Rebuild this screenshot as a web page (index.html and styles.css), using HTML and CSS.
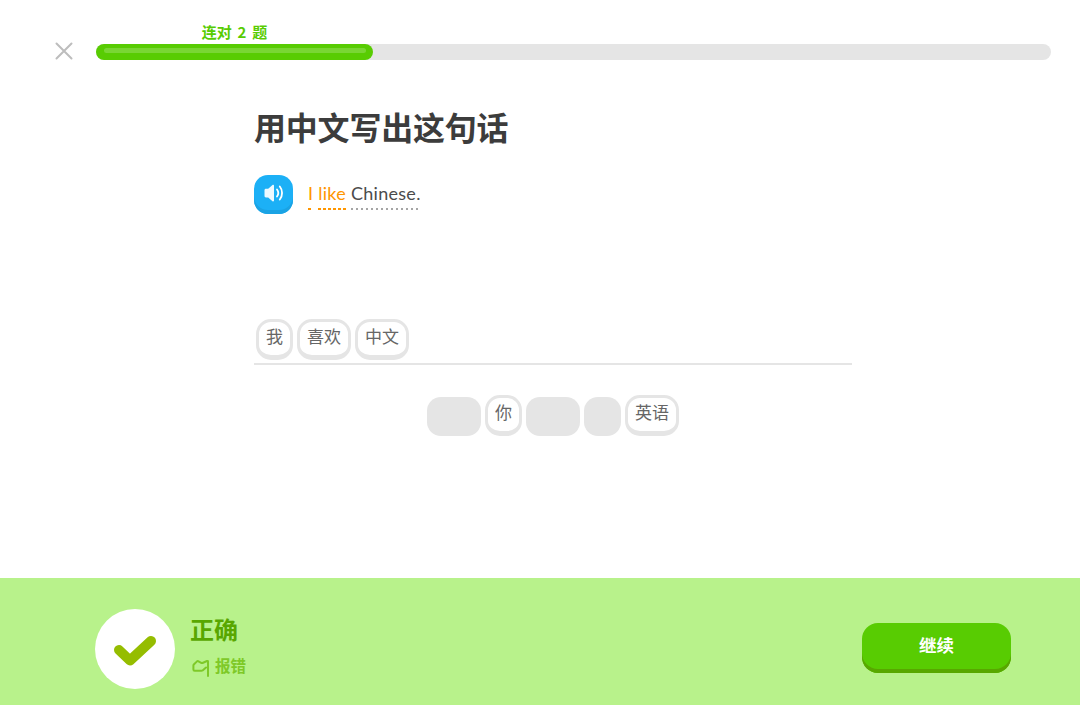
FILE: index.html
```html
<!DOCTYPE html>
<html lang="zh">
<head>
<meta charset="utf-8">
<title>用中文写出这句话</title>
<link rel="stylesheet" href="styles.css">
</head>
<body>
<div class="page">
  <header class="top">
    <button class="close" aria-label="关闭">
      <svg width="18" height="18" viewBox="0 0 18 18"><path d="M1.5 1.5 16.5 16.5M16.5 1.5 1.5 16.5" stroke="#bdbdbd" stroke-width="2" stroke-linecap="round" fill="none"/></svg>
    </button>
    <div class="track">
      <div class="fill">
        <span class="streak">连对 2 题</span>
        <span class="shine"></span>
      </div>
    </div>
  </header>
  <main class="lesson">
    <h1 class="title">用中文写出这句话</h1>
    <div class="prompt">
      <button class="speaker" aria-label="播放">
        <svg width="24" height="24" viewBox="0 0 24 24"><path d="M2.5 9.2c0-.8.6-1.4 1.4-1.4h2.3l4.3-3.9c.6-.5 1.5-.1 1.5.7v15c0 .8-.9 1.2-1.5.7l-4.3-3.9H3.900c-.8 0-1.400-.6-1.400-1.400z" fill="#fff" opacity=".92"/><path d="M15 8.500c1.500 2 1.500 5 0 7" stroke="#fff" stroke-width="1.800" stroke-linecap="round" fill="none"/><path d="M17.800 5.500c3 3.600 3 9.400 0 13" stroke="#fff" stroke-width="1.800" stroke-linecap="round" fill="none"/></svg>
      </button>
      <p class="sentence"><span class="word new">I</span> <span class="word new">like</span> <span class="word">Chinese.</span></p>
    </div>
    <div class="answer">
      <span class="tile">我</span>
      <span class="tile">喜欢</span>
      <span class="tile">中文</span>
    </div>
    <div class="bank">
      <span class="slot wide"></span>
      <span class="tile">你</span>
      <span class="slot wide"></span>
      <span class="slot"></span>
      <span class="tile">英语</span>
    </div>
  </main>
  <footer class="result">
    <div class="verdict">
      <div class="badge">
        <svg width="44" height="34" viewBox="0 0 44 34"><path d="M6 17 17 27.500 38 8" stroke="#95bd00" stroke-width="10" stroke-linecap="round" stroke-linejoin="round" fill="none"/></svg>
      </div>
      <div class="verdict-text">
        <div class="verdict-title">正确</div>
        <div class="report">
          <svg class="report-icon" width="18" height="20" viewBox="0 0 18 20"><path d="M16 18V3.500C16 3 15.500 2.800 15 3L10.500 5C10 5.200 9.700 5.200 9.200 4.900L6.500 3.300C6 3 5.500 3 5 3.400L1.800 6.500C1.500 6.800 1.400 7 1.400 7.500V11.500C1.400 12.300 1.900 12.800 2.700 12.800H9.500C10 12.800 10.300 12.700 10.600 12.400L14 9.500" stroke="#7ec928" stroke-width="2" stroke-linecap="round" stroke-linejoin="round" fill="none"/></svg>
          <span>报错</span>
        </div>
      </div>
    </div>
    <button class="continue">继续</button>
  </footer>
</div>
</body>
</html>
```
FILE: styles.css
```css
* { box-sizing: border-box; }
html, body { margin: 0; padding: 0; background: #fff; }
body { font-family: "Noto Sans CJK SC", "Noto Sans", sans-serif; }
button { font: inherit; border: 0; padding: 0; cursor: pointer; }

.page { width: 1080px; height: 705px; display: flex; flex-direction: column; overflow: hidden; }

.top { display: flex; align-items: center; gap: 23px; height: 16px; margin: 44px 29px 0 55px; }
.close { width: 18px; height: 18px; background: none; display: block; line-height: 0; margin-top: -3px; flex: none; }
.track { flex: 1; height: 16px; border-radius: 8px; background: #e5e5e5; }
.fill { position: relative; width: 277px; height: 16px; border-radius: 8px; background: #58cc02; padding: 4px 7px 0 8px; }
.shine { display: block; height: 5px; border-radius: 3px; background: #79d634; }
.streak { position: absolute; left: 0; right: 0; top: -22px; text-align: center; font-size: 15px; line-height: 20px; font-weight: 700; color: #58cc02; word-spacing: 2.500px; white-space: pre; }

.lesson { flex: 1; width: 598px; margin-left: 254px; }
.title { margin: 43px 0 0; font-size: 32px; line-height: 46px; font-weight: 700; color: #3c3c3c; letter-spacing: -.2px; white-space: nowrap; }

.prompt { display: flex; align-items: flex-start; gap: 15px; margin-top: 26px; height: 39px; }
.speaker { width: 39px; height: 39px; border-radius: 14px; background: #1cb0f6; box-shadow: inset 0 -4px 0 #1aa3e4; display: flex; align-items: center; justify-content: center; padding-bottom: 4px; flex: none; }
.sentence { margin: 6px 0 0; font-family: "Lato", "Noto Sans", sans-serif; font-size: 18px; line-height: 24px; color: #4b4b4b; letter-spacing: .28px; white-space: nowrap; }
.word { display: inline-block; height: 29px; background-image: linear-gradient(90deg, #a5a5a5 2px, transparent 2px); background-size: 5px 2px; background-repeat: repeat-x; background-position: 0 100%; }
.word.new { color: #ff9600; background-image: linear-gradient(90deg, #ff9600 3px, transparent 3px); background-size: 5px 2px; }

.answer { display: flex; align-items: flex-start; gap: 4px; height: 46px; margin-top: 105px; padding: 0 2px; border-bottom: 2px solid #e5e5e5; }
.bank { display: flex; justify-content: center; gap: 4px; margin-top: 30px; }

.tile { display: block; height: 41px; padding: 2px 7px 0; border: 3px solid #e5e5e5; border-bottom-width: 5px; border-radius: 15px; background: #fff; font-size: 17px; line-height: 24px; color: #666; }
.slot { display: block; width: 37px; height: 39px; margin-top: 2px; border-radius: 14px; background: #e5e5e5; }
.slot.wide { width: 54px; }

.result { height: 127px; background: #b8f28b; display: flex; align-items: flex-start; justify-content: space-between; padding: 31px 69px 0 95px; flex: none; }
.verdict { display: flex; gap: 15px; }
.badge { width: 80px; height: 80px; border-radius: 50%; background: #fff; display: flex; align-items: center; justify-content: center; padding-top: 1px; }
.verdict-title { font-size: 24px; line-height: 34px; font-weight: 700; color: #58a700; margin-top: 3px; }
.report { display: flex; align-items: center; gap: 5px; margin: 9px 0 0 2px; height: 20px; font-size: 15.500px; font-weight: 700; color: #7ec928; line-height: 20px; }
.report-icon { flex: none; display: block; margin-top: 6px; }
.continue { width: 149px; height: 50px; margin-top: 14px; border-radius: 16px; background: #58cc02; box-shadow: inset 0 -4px 0 #58a700; color: #fff; font-size: 17.500px; font-weight: 700; padding-bottom: 7px; }
```
